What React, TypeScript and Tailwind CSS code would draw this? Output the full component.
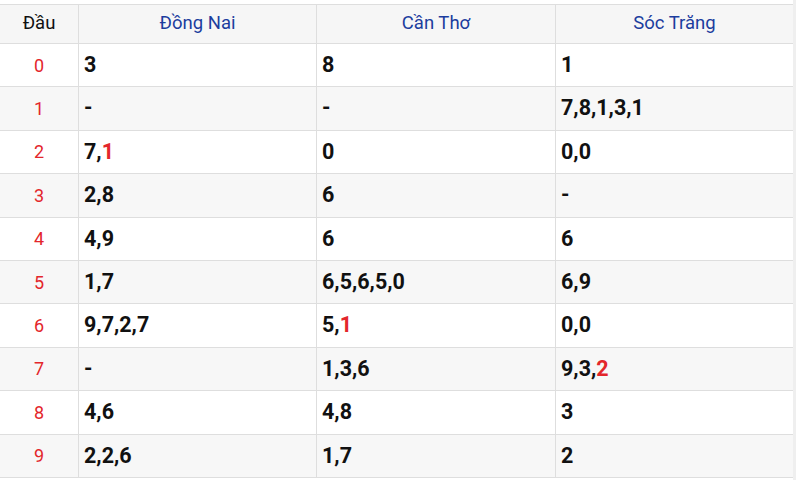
import React from "react";

const rows: { d: string; c: string[] }[] = [
  { d: "0", c: ["3", "8", "1"] },
  { d: "1", c: ["-", "-", "7,8,1,3,1"] },
  { d: "2", c: ["7,|1", "0", "0,0"] },
  { d: "3", c: ["2,8", "6", "-"] },
  { d: "4", c: ["4,9", "6", "6"] },
  { d: "5", c: ["1,7", "6,5,6,5,0", "6,9"] },
  { d: "6", c: ["9,7,2,7", "5,|1", "0,0"] },
  { d: "7", c: ["-", "1,3,6", "9,3,|2"] },
  { d: "8", c: ["4,6", "4,8", "3"] },
  { d: "9", c: ["2,2,6", "1,7", "2"] },
];

function renderCell(s: string) {
  const parts = s.split("|");
  if (parts.length === 1) return <span>{s}</span>;
  return (
    <>
      <span>{parts[0]}</span>
      <span className="text-[#e3262b]">{parts[1]}</span>
    </>
  );
}

export default function App() {
  return (
    <div
      className="w-[800px] h-[480px] bg-white overflow-hidden relative"
      style={{ fontFamily: "Roboto, 'Noto Sans', sans-serif" }}
    >
      <div className="absolute left-[793px] top-0 w-[3px] h-[480px] bg-[#efefef]" />
      <div className="pt-[4px] w-[794px]">
        <div className="border-t border-r border-[#dedede]">
          <div className="grid grid-cols-[79px_238px_239px_237px] h-[39px] bg-[#f6f6f6] border-b border-[#dedede] text-[18.5px] items-center">
            <div className="text-center text-[#111] border-r border-[#dedede] h-full flex items-center justify-center">Đầu</div>
            <div className="text-center text-[#1c3d9e] border-r border-[#dedede] h-full flex items-center justify-center">Đồng Nai</div>
            <div className="text-center text-[#1c3d9e] border-r border-[#dedede] h-full flex items-center justify-center">Cần Thơ</div>
            <div className="text-center text-[#1c3d9e] h-full flex items-center justify-center">Sóc Trăng</div>
          </div>
          {rows.map((r, i) => (
            <div
              key={r.d}
              className={`grid grid-cols-[79px_238px_239px_237px] h-[43.4px] border-b border-[#dedede] ${i % 2 === 1 ? "bg-[#f7f7f7]" : "bg-white"}`}
            >
              <div className="border-r border-[#dedede] flex items-center justify-center text-[18px] text-[#e3262b]">{r.d}</div>
              {r.c.map((c, j) => (
                <div
                  key={j}
                  className={`flex items-center pl-[5px] text-[21.5px] font-bold text-[#111] ${j < 2 ? "border-r border-[#dedede]" : ""}`}
                >
                  {renderCell(c)}
                </div>
              ))}
            </div>
          ))}
        </div>
      </div>
    </div>
  );
}
